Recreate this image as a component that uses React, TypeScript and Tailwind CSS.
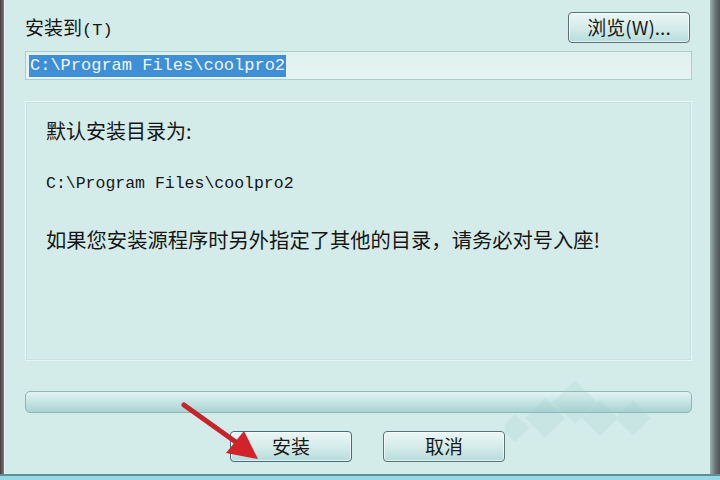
import React from "react"

const cjk = { fontFamily: '"Noto Sans CJK SC", "Liberation Sans", sans-serif' }
const mono = { fontFamily: '"Liberation Mono", "Noto Sans CJK SC", monospace' }

const DialogButton = ({ label, className = "" }: { label: string; className?: string }) => (
    <button
        className={`h-[31px] flex items-center justify-center rounded-[4px] border border-[#5d7273] bg-gradient-to-b from-[#eaf6f5] via-[#d6ecea] to-[#b5dcdc] text-[19px] text-[#1a1a1a] shadow-[inset_0_0_0_1px_rgba(255,255,255,0.6)] ${className}`}
        style={cjk}
    >
        {label}
    </button>
)

export default function App() {
    const path = "C:\\Program Files\\coolpro2"
    return (
        <div className="relative w-[720px] h-[480px] overflow-hidden bg-[#d3ecea] flex flex-col">
            <div className="flex flex-1 min-h-0">
                <div className="w-[4px] bg-gradient-to-r from-[#4a3a3e] to-[#7f7a7c]" />
                <div className="flex-1 flex flex-col pl-[20px] pr-[18px] border-l border-[#e7f4f3]">
                    <div className="flex items-end justify-between pt-[12px]">
                        <div className="text-[19px] leading-none mb-[4px] text-[#161616]" style={cjk}>
                            安装到<span style={mono} className="text-[17px]">(T)</span>
                        </div>
                        <DialogButton label="浏览(W)..." className="w-[122px] mr-[2px] text-[18px]" />
                    </div>
                    <div className="mt-[8px] h-[29px] flex items-center pl-[3px] border border-[#a9cfcd] bg-gradient-to-b from-[#dff1ef] to-[#e8f4f3]">
                        <span className="bg-[#3f8fd6] text-[#eef6ff] text-[17px] leading-[22px] px-[1px]" style={mono}>
                            {path}
                        </span>
                    </div>
                    <div className="mt-[21px] h-[260px] border border-[#e9f6f5] shadow-[inset_0_0_0_1px_#c6e2e0] flex flex-col pl-[20px] text-[#161616]">
                        <div className="mt-[17px] text-[20px] leading-[24px]" style={cjk}>默认安装目录为:</div>
                        <div className="mt-[31px] text-[16.5px] leading-[20px]" style={mono}>{path}</div>
                        <div className="mt-[33px] text-[20.3px] leading-[24px]" style={cjk}>
                            如果您安装源程序时另外指定了其他的目录，请务必对号入座!
                        </div>
                    </div>
                    <div className="mt-[30px] h-[22px] rounded-[5px] border border-[#8fb5b5] bg-gradient-to-b from-[#e3f3f2] via-[#c5e4e3] to-[#a8d3d3]" />
                    <div className="mt-[18px] flex gap-[31px] pl-[205px]">
                        <DialogButton label="安装" className="w-[122px] border-[#456a78]" />
                        <DialogButton label="取消" className="w-[122px]" />
                    </div>
                </div>
                <div className="w-[10px] bg-gradient-to-r from-[#9ab3b3] via-[#6e7778] to-[#4f5355]" />
            </div>
            <div className="h-[2px] bg-[#5f8f9a]" />
            <div className="h-[4px] bg-[#96d8e4]" />

            {/* watermark */}
            <svg className="absolute left-[505px] top-[378px] pointer-events-none" width="180" height="70" viewBox="0 0 180 70">
                <g fill="#9cc9c7" opacity="0.18">
                    <polygon points="70,2 92,24 70,46 48,24" />
                    <polygon points="40,20 60,40 40,60 20,40" />
                    <polygon points="95,22 113,40 95,58 77,40" />
                    <polygon points="10,36 24,50 10,64 -4,50" />
                    <polygon points="128,22 146,40 128,58 110,40" />
                </g>
            </svg>

            {/* red arrow */}
            <svg className="absolute left-[170px] top-[395px] pointer-events-none" width="100" height="75" viewBox="0 0 100 75">
                <line x1="14" y1="10" x2="70" y2="50" stroke="#c8232a" strokeWidth="5" strokeLinecap="round" />
                <polygon points="88,64 56,58 74,36" fill="#d0232a" />
            </svg>
        </div>
    )
}
